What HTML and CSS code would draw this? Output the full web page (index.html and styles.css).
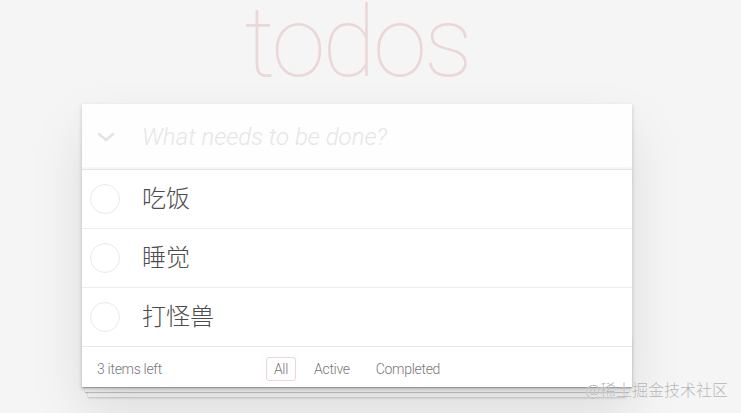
FILE: index.html
```html
<!DOCTYPE html>
<html lang="en">

<head>
    <meta charset="UTF-8">
    <meta name="viewport" content="width=device-width, initial-scale=1.0">
    <title>Todos</title>

    <link rel="stylesheet" href="styles.css">
</head>

<body>
    <div class="page">
        <h1 class="title">todos</h1>

        <section class="todoapp">
            <header class="header">
                <label class="toggle-all" for="toggle-all">
                    <svg width="18" height="10" viewBox="0 0 18 10">
                        <polyline points="2,2 9,8 16,2" fill="none" stroke="#e3e3e3" stroke-width="2.4" stroke-linecap="round" stroke-linejoin="round"></polyline>
                    </svg>
                </label>
                <input id="new-todo" class="new-todo" type="text" placeholder="What needs to be done?">
            </header>

            <ul class="todo-list">
                <li>
                    <span class="toggle"></span>
                    <label>吃饭</label>
                </li>
                <li>
                    <span class="toggle"></span>
                    <label>睡觉</label>
                </li>
                <li>
                    <span class="toggle"></span>
                    <label>打怪兽</label>
                </li>
            </ul>

            <footer class="footer">
                <span class="todo-count">3 items left</span>
                <ul class="filters">
                    <li><a class="selected" href="#/">All</a></li>
                    <li><a href="#/active">Active</a></li>
                    <li><a href="#/completed">Completed</a></li>
                </ul>
                <span></span>
            </footer>
        </section>
    </div>

    <!-- 右下角水印 -->
    <div class="watermark">@稀土掘金技术社区</div>
</body>

</html>
```

FILE: styles.css
```css
* {
    box-sizing: border-box;
}

html,
body {
    margin: 0;
    padding: 0;
}

body {
    background: #f5f5f5;
    color: #4d4d4d;
    font: 14px 'Helvetica Neue', Roboto, 'Noto Sans CJK SC', sans-serif;
    font-weight: 300;
    height: 413px;
    overflow: hidden;
}

.page {
    width: 550px;
    margin-left: 82px;
}

.title {
    margin: 0 0 18px;
    font-size: 98px;
    line-height: 86px;
    font-weight: 100;
    letter-spacing: -3px;
    text-align: center;
    color: rgba(175, 47, 47, 0.15);
}

.todoapp {
    position: relative;
    background: #fff;
    box-shadow: 0 2px 4px 0 rgba(0, 0, 0, 0.2),
        0 25px 50px 0 rgba(0, 0, 0, 0.1);
}

/* 輸入列 */
.header {
    position: relative;
    display: flex;
    align-items: center;
}

.toggle-all {
    position: absolute;
    left: 15px;
    top: 0;
    bottom: 0;
    width: 18px;
    display: flex;
    align-items: center;
}

.new-todo {
    width: 100%;
    margin: 0;
    height: 65px;
    padding: 16px 16px 16px 60px;
    border: none;
    outline: none;
    font: inherit;
    font-size: 24px;
    line-height: 33px;
    color: inherit;
    background: rgba(0, 0, 0, 0.003);
    box-shadow: inset 0 -2px 1px rgba(0, 0, 0, 0.03);
}

.new-todo::placeholder {
    font-style: italic;
    font-weight: 300;
    color: #e6e6e6;
}

/* 清單 */
.todo-list {
    margin: 0;
    padding: 0;
    list-style: none;
    border-top: 1px solid #e6e6e6;
}

.todo-list li {
    display: flex;
    align-items: center;
    font-size: 24px;
    border-bottom: 1px solid #ededed;
}

.todo-list li:last-child {
    border-bottom: none;
}

.todo-list .toggle {
    flex: none;
    width: 30px;
    height: 30px;
    margin-left: 8px;
    border: 1px solid #e9e9e9;
    border-radius: 50%;
}

.todo-list label {
    padding: 15px 15px 15px 22px;
    line-height: 28px;
    color: #4d4d4d;
    font-weight: 300;
}

/* 底部 */
.footer {
    position: relative;
    display: grid;
    grid-template-columns: 1fr auto 1fr;
    align-items: center;
    height: 41px;
    padding: 10px 15px;
    color: #777;
    letter-spacing: -0.3px;
    border-top: 1px solid #e6e6e6;
}

/* 疊起來的紙張效果 */
.footer::before {
    content: '';
    position: absolute;
    right: 0;
    bottom: 0;
    left: 0;
    height: 50px;
    overflow: hidden;
    box-shadow: 0 1px 1px rgba(0, 0, 0, 0.2),
        0 8px 0 -3px #f6f6f6,
        0 9px 1px -3px rgba(0, 0, 0, 0.2),
        0 16px 0 -6px #f6f6f6,
        0 17px 2px -6px rgba(0, 0, 0, 0.2);
    z-index: -1;
}

.todo-count {
    line-height: 20px;
}

.filters {
    margin: 0;
    padding: 0;
    list-style: none;
    display: flex;
    gap: 4px;
}

.filters a {
    display: block;
    margin: 0 3px;
    padding: 3px 7px;
    line-height: 16px;
    color: inherit;
    text-decoration: none;
    border: 1px solid transparent;
    border-radius: 3px;
}

.filters a.selected {
    border-color: rgba(175, 47, 47, 0.2);
}

.watermark {
    position: absolute;
    z-index: 2;
    right: 13px;
    bottom: 12px;
    font-size: 16px;
    font-family: 'Noto Sans CJK SC', sans-serif;
    color: #b5b5b5;
    text-shadow: 0 0 1px #fff;
}
```
